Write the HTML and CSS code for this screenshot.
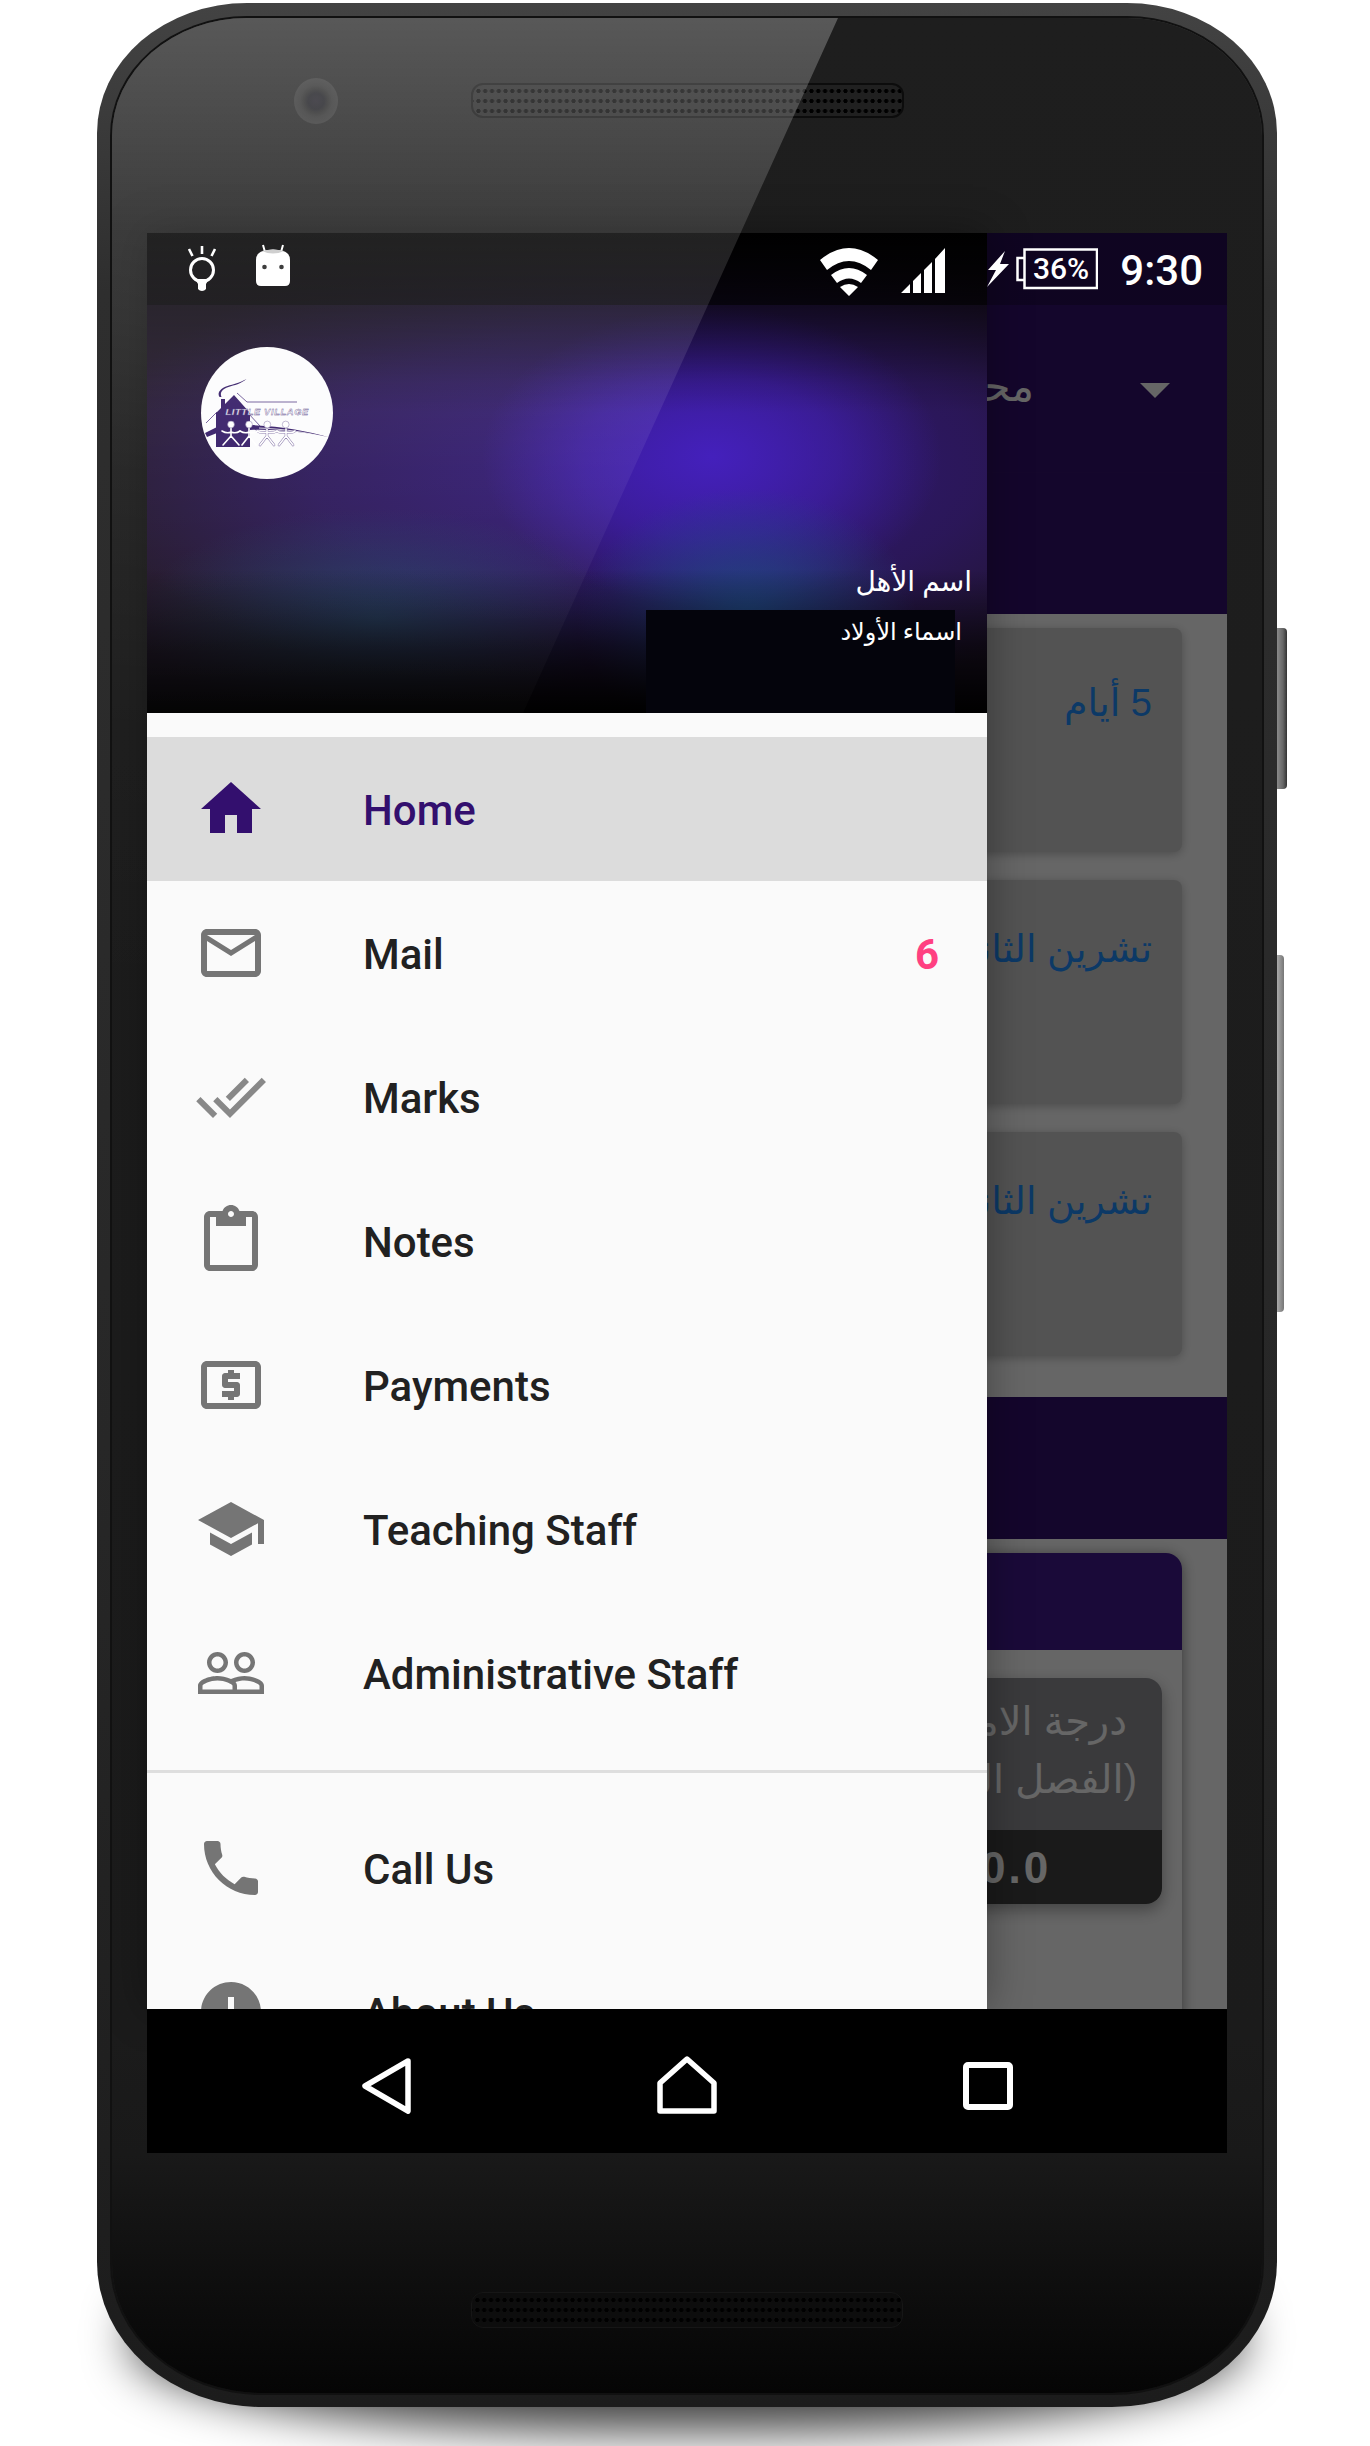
FILE: index.html
```html
<!DOCTYPE html>
<html lang="en">
<head>
<meta charset="utf-8">
<title>Little Village</title>
<link rel="stylesheet" href="styles.css">
</head>
<body>
<div class="stage">
  <div class="phone">
    <span class="btn btn-power"></span>
    <span class="btn btn-volume"></span>
    <div class="bezel">
      <div class="glass"></div>
      <div class="bezel-top">
        <span class="camera"></span>
        <span class="speaker"></span>
      </div>
      <div class="screen">
        <div class="app" dir="rtl">
          <div class="app-status"></div>
          <div class="toolbar">
            <span class="caret"></span>
            <span class="toolbar-title">محمد أحمد</span>
          </div>
          <div class="band band-tabs"></div>
          <div class="cards">
            <div class="card card-first"><span class="card-text">5 أيام</span></div>
            <div class="card"><span class="card-text">تشرين الثاني 2017</span></div>
            <div class="card"><span class="card-text">تشرين الثاني 2017</span></div>
          </div>
          <div class="band band-section"></div>
          <div class="panel">
            <div class="panel-head"></div>
            <div class="grade">
              <div class="grade-title">
                <div class="grade-line grade-line-a">درجة الامتحان الأول</div>
                <div class="grade-line">(الفصل الدراسي الأول)</div>
              </div>
              <div class="grade-value" dir="ltr">100.0</div>
            </div>
          </div>
          <div class="scrim"></div>
        </div>

        <aside class="drawer">
          <header class="drawer-head">
            <span class="head-block"></span>
            <svg class="logo" viewBox="0 0 132 132" aria-label="Little Village logo">
              <circle cx="66" cy="66" r="66" fill="#fcfcfd"/>
              <path d="M18.500 50c-3-5 2-9 8-11s12-3 19-7c-6 5-12 6-18 8s-9 5-7 10z" fill="#331a66"/>
              <path d="M5 76l11-11M36 46l10 9h50M47 66l12 13" fill="none" stroke="#6f5a98" stroke-width="1"/>
              <path d="M15 100V66l5-5V52h4v5l9-9 16 18v34z" fill="#331a66"/>
              <path d="M4 86l12-6v6L6 90zM49 78c30 1 58 6 78 12-24-5-50-8-78-7z" fill="#331a66"/>
              <path d="M58 81c24 1 48 4 69 10" fill="none" stroke="#fff" stroke-width=".8"/>
              <g fill="none" stroke="#7d6ca2" stroke-width="2.600" stroke-linecap="round">
                <path d="M66 82v7l-7 9M66 89l7 9M56 84q5 3 10 1q5 2 10-1"/>
                <path d="M85 82v7l-7 9M85 89l7 9M76 84q4 3 9 1q5 2 9-1"/>
              </g>
              <g fill="none" stroke="#fff" stroke-width="1.600" stroke-linecap="round">
                <path d="M66 82v7l-7 9M66 89l7 9M56 84q5 3 10 1q5 2 10-1"/>
                <path d="M85 82v7l-7 9M85 89l7 9M76 84q4 3 9 1q5 2 9-1"/>
                <path d="M30 80v9l-8 9M30 89l8 9M21 84q5 3 9 1q5 2 9-1"/>
                <path d="M48 80v9l-7 9M48 89l7 9M39 84q5 3 9 1q5 2 9-1"/>
              </g>
              <g fill="#fff" stroke="#7d6ca2" stroke-width=".5">
                <circle cx="30" cy="77.500" r="3.400"/><circle cx="48" cy="77.500" r="3.400"/>
                <circle cx="66.300" cy="77.500" r="3.400"/><circle cx="84.700" cy="77.500" r="3.400"/>
              </g>
              <text class="logo-text" x="24.500" y="68">LITTLE VILLAGE</text>
            </svg>
            <div class="parent-name" dir="rtl">اسم الأهل</div>
            <div class="child-names" dir="rtl">اسماء الأولاد</div>
          </header>

          <nav class="menu">
            <a class="item item-active">
              <svg class="icon" viewBox="0 0 24 24"><path d="M10 20v-6h4v6h5v-8h3L12 3 2 12h3v8z"/></svg>
              <span class="label">Home</span>
            </a>
            <a class="item">
              <svg class="icon" viewBox="0 0 24 24"><path d="M20 4H4c-1.100 0-1.990.9-1.990 2L2 18c0 1.100.9 2 2 2h16c1.100 0 2-.9 2-2V6c0-1.100-.9-2-2-2zm0 14H4V8l8 5 8-5v10zm-8-7L4 6h16l-8 5z"/></svg>
              <span class="label">Mail</span>
              <span class="badge">6</span>
            </a>
            <a class="item">
              <svg class="icon icon-light" viewBox="0 0 24 24"><path d="M18 7l-1.410-1.410-6.340 6.340 1.410 1.410L18 7zm4.240-1.410L11.660 16.170 7.480 12l-1.410 1.410L11.660 19l12-12-1.420-1.410zM.41 13.410L6 19l1.410-1.410L1.830 12 .41 13.410z"/></svg>
              <span class="label">Marks</span>
            </a>
            <a class="item">
              <svg class="icon" viewBox="0 0 24 24"><path d="M19 2h-4.180C14.400.84 13.300 0 12 0c-1.300 0-2.400.84-2.820 2H5c-1.100 0-2 .9-2 2v16c0 1.100.9 2 2 2h14c1.100 0 2-.9 2-2V4c0-1.100-.9-2-2-2zm-7 0c.55 0 1 .45 1 1s-.45 1-1 1-1-.45-1-1 .45-1 1-1zm7 18H5V4h2v3h10V4h2v16z"/></svg>
              <span class="label">Notes</span>
            </a>
            <a class="item">
              <svg class="icon" viewBox="0 0 24 24"><path d="M11 17h2v-1h1c.55 0 1-.45 1-1v-3c0-.55-.45-1-1-1h-3v-1h4V8h-2V7h-2v1h-1c-.55 0-1 .45-1 1v3c0 .55.45 1 1 1h3v1H9v2h2v1zm9-13H4c-1.110 0-1.990.89-1.990 2L2 18c0 1.110.89 2 2 2h16c1.110 0 2-.89 2-2V6c0-1.110-.89-2-2-2zm0 14H4V6h16v12z"/></svg>
              <span class="label">Payments</span>
            </a>
            <a class="item">
              <svg class="icon" viewBox="0 0 24 24"><path d="M5 13.180v4L12 21l7-3.820v-4L12 17l-7-3.820zM12 3L1 9l11 6 9-4.910V17h2V9L12 3z"/></svg>
              <span class="label">Teaching Staff</span>
            </a>
            <a class="item">
              <svg class="icon" viewBox="0 0 24 24"><path fill-rule="evenodd" d="M16.500 13c-1.200 0-3.070.34-4.500 1-1.430-.67-3.300-1-4.500-1C5.330 13 1 14.080 1 16.250V19h22v-2.750c0-2.170-4.330-3.250-6.500-3.250zm-4 4.500h-10v-1.250c0-.54 2.560-1.750 5-1.750s5 1.210 5 1.750v1.250zm9 0H14v-1.250c0-.46-.2-.86-.52-1.220.88-.3 1.960-.53 3.020-.53 2.440 0 5 1.210 5 1.750v1.250zM7.500 12c1.930 0 3.500-1.570 3.500-3.500S9.430 5 7.500 5 4 6.570 4 8.500 5.570 12 7.500 12zm0-5.500c1.100 0 2 .9 2 2s-.9 2-2 2-2-.9-2-2 .9-2 2-2zm9 5.500c1.930 0 3.500-1.570 3.500-3.500S18.430 5 16.500 5 13 6.570 13 8.500s1.570 3.500 3.500 3.500zm0-5.500c1.100 0 2 .9 2 2s-.9 2-2 2-2-.9-2-2 .9-2 2-2z"/></svg>
              <span class="label">Administrative Staff</span>
            </a>
            <div class="divider"></div>
            <a class="item">
              <svg class="icon" viewBox="0 0 24 24"><path d="M6.620 10.790c1.440 2.830 3.760 5.140 6.590 6.590l2.200-2.200c.27-.27.67-.36 1.020-.24 1.120.37 2.330.57 3.570.57.55 0 1 .45 1 1V20c0 .55-.45 1-1 1-9.390 0-17-7.610-17-17 0-.55.45-1 1-1h3.500c.55 0 1 .45 1 1 0 1.250.2 2.450.57 3.570.11.35.03.74-.25 1.020l-2.200 2.200z"/></svg>
              <span class="label">Call Us</span>
            </a>
            <a class="item">
              <svg class="icon" viewBox="0 0 24 24"><path d="M12 2C6.480 2 2 6.480 2 12s4.480 10 10 10 10-4.480 10-10S17.520 2 12 2zm1 15h-2v-6h2v6zm0-8h-2V7h2v2z" transform="rotate(180 12 12)"/></svg>
              <span class="label">About Us</span>
            </a>
          </nav>
        </aside>

        <div class="status">
          <svg class="st st-bulb" viewBox="0 0 42 56">
            <path d="M21 3v8M8 6l3.500 7M34 6l-3.500 7" stroke="#fff" stroke-width="2.600" fill="none"/>
            <circle cx="21" cy="27" r="11.500" stroke="#fff" stroke-width="3" fill="none"/>
            <path d="M14 36l3 5v5c2 2.500 6 2.500 8 0v-5l3-5z" fill="#fff"/>
          </svg>
          <svg class="st st-android" viewBox="0 0 34 56">
            <path d="M9 9L7 2M25 9l2-7" stroke="#fff" stroke-width="2" fill="none"/>
            <path d="M7 8q10-3 20 0q7 2 7 9v21q0 5-5 5H5q-5 0-5-5V17q0-7 7-9z" fill="#fff"/>
            <path d="M6 8q11-3 22 0q-11 5-22 0z" fill="#c8c8c8"/>
            <circle cx="8.500" cy="24" r="2.300" fill="#222"/><circle cx="25.500" cy="24" r="2.300" fill="#222"/>
          </svg>
          <span class="st-spacer"></span>
          <svg class="st st-wifi" viewBox="0 0 58 56">
            <path d="M0 17Q29-7 58 17L51 27Q29 9 7 27zM11 32Q29 18 47 32L41 40Q29 31 17 40zM20 44Q29 38 38 44L29 53z" fill="#fff"/>
          </svg>
          <svg class="st st-signal" viewBox="0 0 44 56">
            <path d="M0 50l9-9v9zM12 38l8-8v20h-8zM23 27l8-8v31h-8zM34 16L44 5v45H34z" fill="#fff"/>
          </svg>
          <svg class="st st-bolt" viewBox="0 0 23 56">
            <path d="M19 8L2 27h8L1 44l22-23h-9z" fill="#fff"/>
          </svg>
          <svg class="st st-battery" viewBox="0 0 82 56">
            <path d="M8.500 15H1.500v22h7M8.500 6.500H81V45H8.500z" fill="none" stroke="#fff" stroke-width="2.500"/>
            <text class="battery-text" x="45" y="36">36%</text>
          </svg>
          <span class="clock">9:30</span>
        </div>

        <div class="navbar">
          <svg class="nav-icon nav-back" viewBox="0 0 51 56"><path d="M47 3L4 28l43 25z"/></svg>
          <svg class="nav-icon nav-home" viewBox="0 0 60 59"><path d="M30 4l27 24v28H3V28z"/></svg>
          <svg class="nav-icon nav-square" viewBox="0 0 50 48"><rect x="3" y="3" width="44" height="42" rx="2"/></svg>
        </div>
      </div>
      <div class="bezel-bottom">
        <span class="speaker speaker-low"></span>
      </div>
    </div>
  </div>
</div>
</body>
</html>
```

FILE: styles.css
```css
* { box-sizing: border-box; }

html {
  background: #fff;
}

html, body {
  margin: 0;
  height: 2446px;
  overflow: hidden;
}

.stage {
  padding: 3px 0 0 97px;
}

.phone {
  position: relative;
  width: 1180px;
  height: 2404px;
  padding: 15px 15px 14px;
  border-radius: 150px 150px 165px 165px / 130px 130px 145px 145px;
  background: linear-gradient(#434343 0, #2e2e2e 12%, #272727 60%, #1c1c1c 100%);
}

.phone::before {
  content: "";
  position: absolute;
  z-index: -1;
  left: 35px;
  right: 35px;
  bottom: -24px;
  height: 190px;
  border-radius: 45%;
  background: rgba(0, 0, 0, .75);
  filter: blur(24px);
}

.btn {
  position: absolute;
  left: 100%;
  border-radius: 0 4px 4px 0;
  background: linear-gradient(to right, #8a8a8a, #666 60%, #333);
}
.btn-power { top: 625px; width: 10px; height: 161px; }
.btn-volume { top: 952px; width: 7px; height: 357px; background: linear-gradient(to right, #aaa, #777); }

.bezel {
  position: relative;
  height: 100%;
  overflow: hidden;
  display: flex;
  flex-direction: column;
  border-radius: 135px 135px 150px 150px / 118px 118px 130px 130px;
  background: linear-gradient(#1e1e1e 0, #1b1b1b 85%, #191919 90%, #050505 100%);
  box-shadow: 0 0 0 2px #111;
}

.glass {
  position: absolute;
  z-index: 5;
  left: 0;
  top: 0;
  width: 100%;
  height: 985px;
  pointer-events: none;
  background: linear-gradient(rgba(255,255,255,.26) 0, rgba(255,255,255,.135) 215px, rgba(255,255,255,.11) 300px, rgba(255,255,255,.06) 450px, rgba(255,255,255,.015) 695px, rgba(255,255,255,0) 985px);
  clip-path: polygon(0 0, 726px 0, 411px 695px, 35px 695px, 35px 985px, 0 985px);
}

.bezel-top {
  height: 215px;
  flex: none;
  display: flex;
  align-items: flex-start;
  padding: 60px 0 0 182px;
  gap: 133px;
}

.camera {
  width: 44px;
  height: 46px;
  border-radius: 50%;
  background: radial-gradient(circle at 50% 50%, #1c1a22 0, #17171c 8px, #222 12px, #2c2c2c 16px, #313131 22px);
}

.speaker {
  width: 433px;
  height: 35px;
  margin-top: 5px;
  border-radius: 12px;
  border: 2px solid #0c0c0c;
  background:
    radial-gradient(circle, #000 1.800px, transparent 2.400px) 2px 1px / 6.800px 10px,
    #202020;
}

.bezel-bottom {
  flex: 1;
  display: flex;
  justify-content: center;
  padding: 139px 0 0;
}

.speaker-low {
  width: 432px;
  height: 36px;
  margin: 0;
  border: 1px solid #161616;
  background:
    radial-gradient(circle, #000 1.800px, transparent 2.400px) 2px 2px / 6.800px 10px,
    #0d0d0d;
}

.screen {
  position: relative;
  width: 1080px;
  height: 1920px;
  flex: none;
  margin-left: 35px;
  display: flex;
  flex-direction: column;
  background: #000;
}

.app {
  position: relative;
  height: 1776px;
  overflow: hidden;
  background: #fff;
  font-family: "Liberation Sans", "DejaVu Sans", sans-serif;
}

.app-status { height: 72px; background: #330f6e; }

.toolbar {
  height: 168px;
  background: #330f6e;
  display: flex;
  align-items: flex-start;
  padding: 78px 57px 0 0;
  border-bottom: 1px solid #36126f;
}

.caret {
  width: 0;
  height: 0;
  border-left: 15px solid transparent;
  border-right: 15px solid transparent;
  border-top: 15px solid #fff;
}

.toolbar-title {
  margin: -26px 106px 0 0;
  color: #fff;
  font-size: 42px;
  line-height: 60px;
  white-space: nowrap;
}

.band { background: #330f6e; }
.band-tabs { height: 141px; }
.band-section { height: 142px; margin-top: 41px; }

.cards {
  display: flex;
  flex-direction: column;
  gap: 28px;
  padding: 14px 45px 0;
}

.card {
  height: 224px;
  padding: 44px 30px 0;
  border-radius: 8px;
  background: #cfcfcf;
  box-shadow: 0 2px 10px rgba(0,0,0,.25);
}

.card-first { padding-top: 50px; }

.card-text {
  color: #1e90ff;
  font-size: 38px;
  line-height: 50px;
  white-space: nowrap;
}

.panel {
  margin: 14px 45px 0;
  height: 600px;
  background: #fff;
  border-radius: 16px 16px 0 0;
  box-shadow: 0 2px 14px rgba(0,0,0,.45);
}

.panel-head {
  height: 97px;
  border-radius: 16px 16px 0 0;
  background: #431a8e;
}

.grade {
  margin: 28px 20px 0;
  width: 500px;
  height: 226px;
  border-radius: 16px;
  overflow: hidden;
  box-shadow: 0 6px 16px rgba(0,0,0,.35);
}

.grade-title {
  height: 152px;
  padding: 14px 25px 0 0;
  background: #929297;
  color: #fff;
  font-size: 40px;
  white-space: nowrap;
}

.grade-line {
  height: 58px;
  line-height: 58px;
}

.grade-line-a { margin-right: 10px; }

.grade-value {
  height: 74px;
  padding: 0 0 0 264px;
  background: #414141;
  color: #fff;
  font-weight: 700;
  font-size: 44px;
  line-height: 76px;
  letter-spacing: 3px;
}

.scrim {
  position: absolute;
  inset: 0;
  background: rgba(0, 0, 0, .6);
}

.drawer {
  position: absolute;
  left: 0;
  top: 0;
  width: 840px;
  height: 1776px;
  overflow: hidden;
  background: #fafafa;
  box-shadow: 0 0 40px rgba(0, 0, 0, .35);
  font-family: Roboto, "Liberation Sans", sans-serif;
}

.drawer-head {
  position: relative;
  height: 480px;
  padding: 114px 0 0 54px;
  background:
    linear-gradient(#000 0, rgba(0,0,0,.55) 72px, rgba(0,0,0,.1) 150px, rgba(0,0,0,0) 180px),
    linear-gradient(rgba(0,0,0,0) 70%, rgba(0,0,0,.6) 86%, #000 100%),
    radial-gradient(ellipse 170px 130px at 600px 385px, rgba(32,72,130,1), rgba(32,72,130,0)),
    radial-gradient(ellipse 240px 110px at 230px 385px, rgba(30,80,110,.6), rgba(30,80,110,0)),
    radial-gradient(ellipse 230px 150px at 565px 224px, #4420bc 0, rgba(68,32,188,.55) 55%, rgba(68,32,188,0) 100%),
    radial-gradient(ellipse 560px 240px at 500px 235px, #33197e 0, rgba(51,25,126,.55) 60%, rgba(51,25,126,0) 100%),
    #20142a;
}

.head-block {
  position: absolute;
  left: 499px;
  top: 377px;
  width: 309px;
  bottom: 0;
  background: #04040c;
}

.logo {
  position: relative;
  display: block;
  width: 132px;
  height: 132px;
}

.logo-text {
  font-family: "Liberation Sans", sans-serif;
  font-size: 9.400px;
  font-weight: 700;
  font-style: italic;
  letter-spacing: .6px;
  fill: #fff;
  stroke: #4f3a82;
  stroke-width: .35px;
}

.parent-name,
.child-names {
  position: relative;
  color: #fff;
  font-family: "Liberation Serif", "DejaVu Sans", serif;
  white-space: nowrap;
}

.parent-name {
  margin-top: 81px;
  margin-right: 15px;
  font-size: 28px;
  line-height: 44px;
}

.child-names {
  margin-top: 10px;
  margin-right: 25px;
  font-size: 24px;
  line-height: 36px;
}

.menu {
  display: flex;
  flex-direction: column;
  padding-top: 24px;
}

.item {
  flex: none;
  height: 144px;
  display: flex;
  align-items: center;
  padding: 0 48px;
  gap: 96px;
  color: #212121;
}

.item-active {
  background: #dcdcdc;
  color: #330f6e;
}

.icon {
  flex: none;
  width: 72px;
  height: 72px;
  fill: #757575;
}

.icon-light { fill: #888; }
.item-active .icon { fill: #330f6e; }

.label {
  font-size: 42px;
  font-weight: 500;
  line-height: 56px;
  padding-top: 3px;
  white-space: nowrap;
}

.badge {
  margin-left: auto;
  color: #ff4081;
  font-size: 42px;
  font-weight: 700;
  line-height: 56px;
  padding-top: 3px;
}

.divider {
  flex: none;
  height: 3px;
  margin: 25px 0 23px;
  background: #dedede;
}

.status {
  position: absolute;
  z-index: 3;
  left: 0;
  top: 0;
  width: 100%;
  height: 72px;
  display: flex;
  align-items: flex-start;
  padding: 10px 24px 0 34px;
  background: linear-gradient(to right, rgba(0,0,0,.6) 840px, rgba(0,0,0,.25) 840px);
}

.st { flex: none; height: 56px; display: block; }
.st-bulb { width: 42px; }
.st-android { width: 34px; margin-left: 33px; }
.st-spacer { flex: 1; }
.st-wifi { width: 58px; }
.st-signal { width: 44px; margin-left: 23px; }
.st-bolt { width: 23px; margin-left: 41px; }
.st-battery { width: 82px; margin-left: 7px; }

.battery-text {
  font-family: Roboto, sans-serif;
  font-size: 30px;
  font-weight: 500;
  text-anchor: middle;
  fill: #fff;
}

.clock {
  margin-left: 22px;
  color: #fff;
  font-family: Roboto, sans-serif;
  font-size: 42px;
  font-weight: 500;
  line-height: 56px;
}

.navbar {
  flex: none;
  height: 144px;
  position: relative;
  z-index: 3;
  display: flex;
  align-items: flex-start;
  padding: 46px 0 0 214px;
  background: #000;
}

.nav-icon {
  flex: none;
  display: block;
  fill: none;
  stroke: #fff;
  stroke-width: 5.500px;
  stroke-linejoin: round;
}

.nav-back { width: 51px; height: 56px; margin-top: 3px; }
.nav-home { width: 60px; height: 59px; margin-left: 245px; }
.nav-square { width: 50px; height: 48px; margin: 7px 0 0 246px; stroke-width: 6px; }
```
